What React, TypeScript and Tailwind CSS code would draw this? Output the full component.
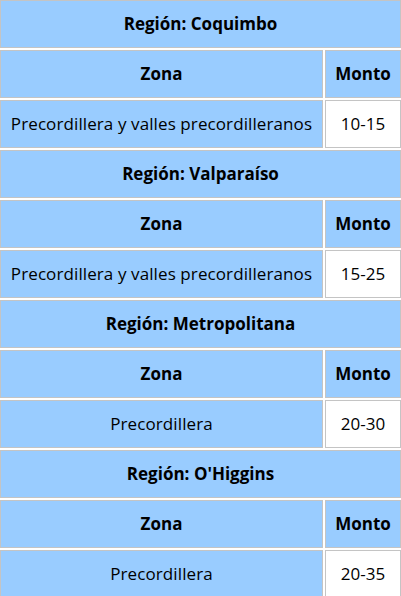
const regiones = [
    { nombre: "Coquimbo", zona: "Precordillera y valles precordilleranos", monto: "10-15" },
    { nombre: "Valparaíso", zona: "Precordillera y valles precordilleranos", monto: "15-25" },
    { nombre: "Metropolitana", zona: "Precordillera", monto: "20-30" },
    { nombre: "O'Higgins", zona: "Precordillera", monto: "20-35" },
];

const cell = "h-[48px] flex items-center justify-center border border-[#c4c4c4]";

const App = () => {
    return (
        <div className="w-[401px] h-[596px] overflow-hidden bg-white font-['Open_Sans',sans-serif] text-[17px] text-black">
            <div className="grid grid-cols-[323px_76px] gap-[2px]">
                {regiones.map((r) => (
                    <div key={r.nombre} className="contents">
                        <div className={`${cell} col-span-2 bg-[#99ccff] font-bold`}>
                            Región: {r.nombre}
                        </div>
                        <div className={`${cell} bg-[#99ccff] font-bold`}>Zona</div>
                        <div className={`${cell} bg-[#99ccff] font-bold`}>Monto</div>
                        <div className={`${cell} bg-[#99ccff] tracking-[0.1px]`}>{r.zona}</div>
                        <div className={`${cell} bg-white`}>{r.monto}</div>
                    </div>
                ))}
            </div>
        </div>
    );
};

export default App;
